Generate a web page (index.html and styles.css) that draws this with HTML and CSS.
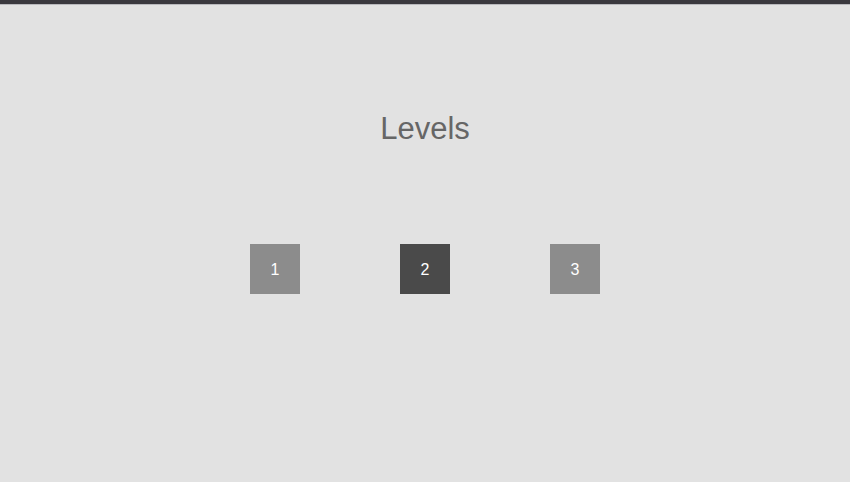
FILE: index.html
```html
<!DOCTYPE html>
<html lang="en">
<head>
    <meta charset="UTF-8">
    <meta name="viewport" content="width=device-width, initial-scale=1.0">
    <title>Levels</title>
    <link rel="stylesheet" href="styles.css">
</head>
<body>
    <div class="topbar"></div>
    <div class="screen">
        <h1 class="title">Levels</h1>
        <div class="levels">
            <button class="level">1</button>
            <button class="level current">2</button>
            <button class="level">3</button>
        </div>
    </div>
</body>
</html>
```

FILE: styles.css
```css
html, body {
    margin: 0;
    height: 100%;
}
body {
    font-family: "Liberation Sans", Arial, sans-serif;
    background: #e2e2e2;
    overflow: hidden;
}
.topbar {
    height: 4px;
    background: #3a393e;
    border-bottom: 1px solid #b9b9bd;
}
.screen {
    display: flex;
    flex-direction: column;
    align-items: center;
}
.title {
    margin: 106px 0 0;
    font-size: 31px;
    font-weight: normal;
    line-height: 36px;
    color: #666666;
}
.levels {
    display: flex;
    gap: 100px;
    margin-top: 97px;
}
.level {
    width: 50px;
    height: 50px;
    border: none;
    padding: 2px 0 0;
    background: #8c8c8c;
    color: #ffffff;
    font-family: "Liberation Sans", Arial, sans-serif;
    font-size: 16px;
}
.level.current {
    background: #4a4a4a;
}
```
